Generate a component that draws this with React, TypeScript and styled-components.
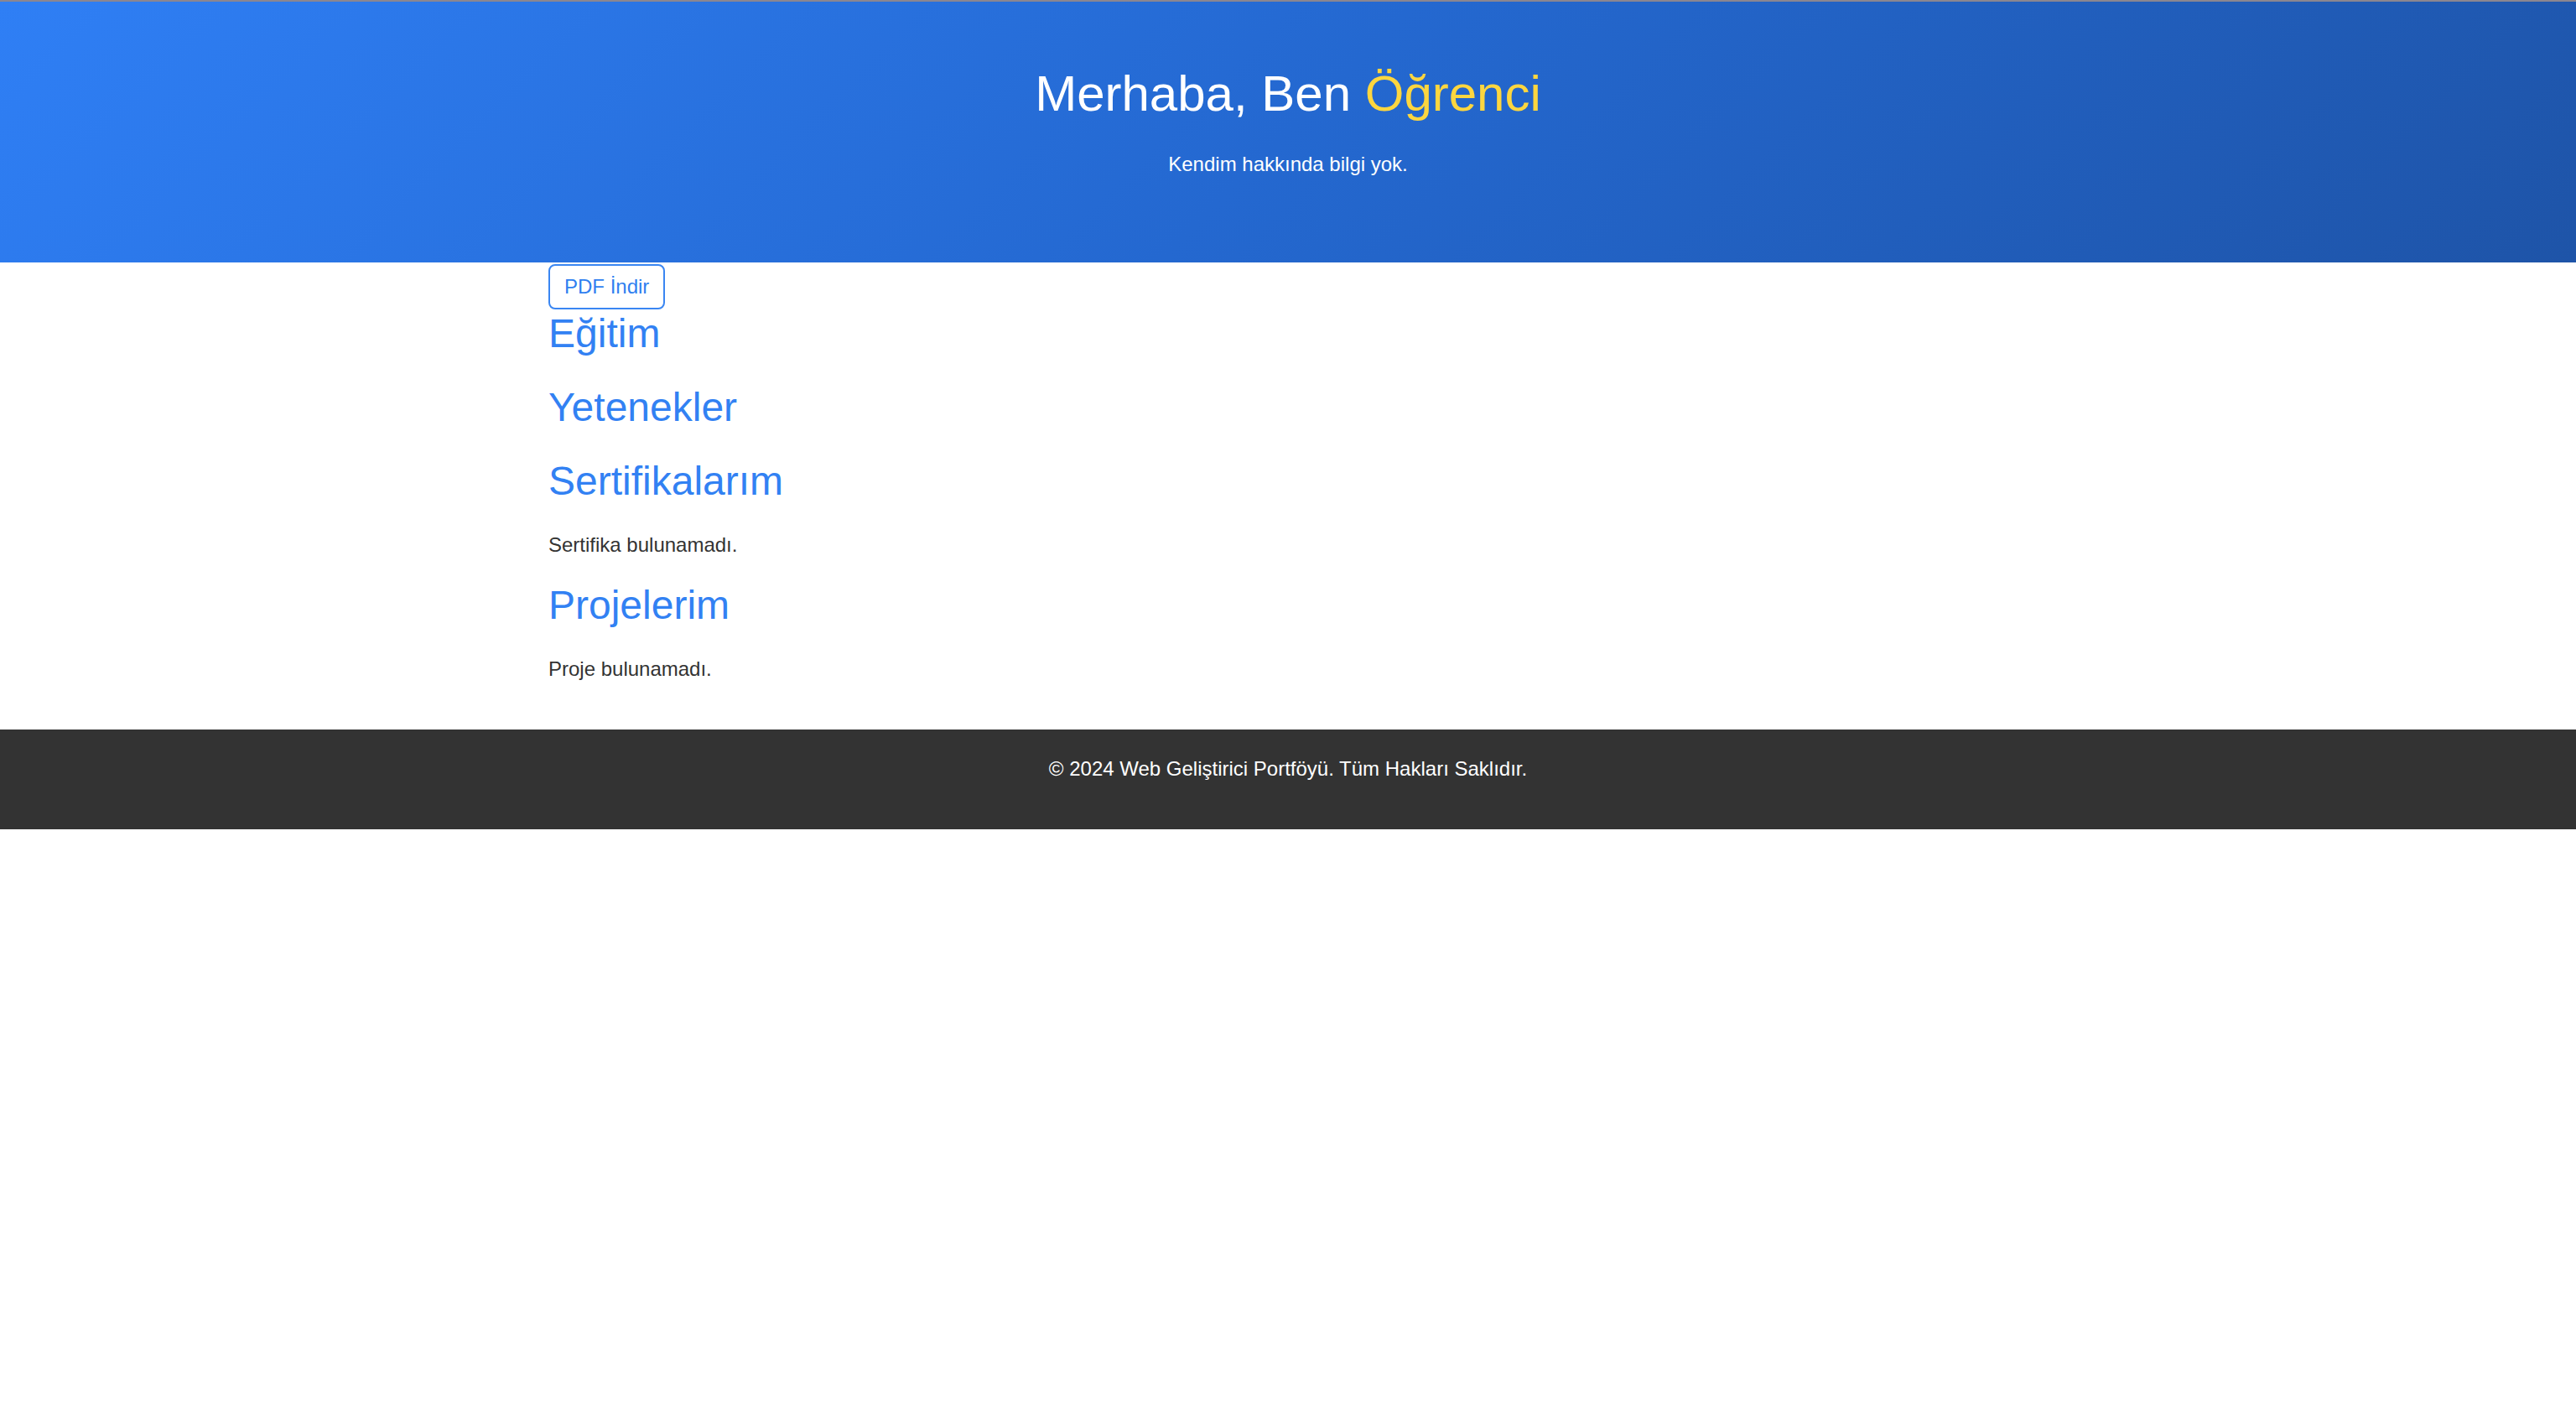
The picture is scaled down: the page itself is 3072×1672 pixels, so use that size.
import React from "react";
import styled, { createGlobalStyle } from "styled-components";

const GlobalStyle = createGlobalStyle`
  html, body {
    margin: 0;
    padding: 0;
    background: #ffffff;
  }
  body {
    font-family: "Liberation Sans", Arial, Helvetica, sans-serif;
    color: #333333;
  }
  * { box-sizing: border-box; }
`;

const Hero = styled.header`
  border-top: 2px solid #8b8690;
  background: linear-gradient(135deg, #2f7ff5 0%, #2468d0 50%, #1e54a8 100%);
  padding: 76px 20px 103px;
  text-align: center;
  color: #ffffff;
`;

const Title = styled.h1`
  margin: 0;
  font-size: 60px;
  line-height: 68px;
  font-weight: 400;
`;

const Highlight = styled.span`
  color: #fdd63f;
`;

const Lead = styled.p`
  margin: 36px 0 0;
  font-size: 24px;
  line-height: 28px;
`;

const Container = styled.main`
  max-width: 1764px;
  margin: 0 auto;
  padding-top: 2px;
  display: flex;
  flex-direction: column;
  align-items: flex-start;
`;

const OutlineButton = styled.button`
  height: 54px;
  padding: 0 17px;
  border: 2px solid #3a86f2;
  border-radius: 8px;
  background: #ffffff;
  color: #2f7ff0;
  font-family: inherit;
  font-size: 24px;
  line-height: 50px;
  cursor: pointer;
`;

const Sections = styled.div`
  margin-top: 1px;
  display: flex;
  flex-direction: column;
  gap: 30px;
`;

const Section = styled.section<{ $empty?: boolean }>`
  display: flex;
  flex-direction: column;
  gap: 34px;
  margin-bottom: ${(p) => (p.$empty ? "2px" : "0")};
`;

const SectionTitle = styled.h2`
  margin: 0;
  font-size: 48px;
  line-height: 56px;
  font-weight: 400;
  color: #3281f3;
`;

const EmptyText = styled.p`
  margin: 0;
  font-size: 24px;
  line-height: 28px;
  color: #333333;
`;

const Footer = styled.footer`
  margin-top: 58px;
  background: #333333;
  color: #ffffff;
  text-align: center;
  padding: 33px 20px 58px;
  font-size: 24px;
  line-height: 28px;
`;

const sections: { title: string; empty?: string }[] = [
  { title: "Eğitim" },
  { title: "Yetenekler" },
  { title: "Sertifikalarım", empty: "Sertifika bulunamadı." },
  { title: "Projelerim", empty: "Proje bulunamadı." },
];

export default function App() {
  return (
    <>
      <GlobalStyle />
      <Hero>
        <Title>
          Merhaba, Ben <Highlight>Öğrenci</Highlight>
        </Title>
        <Lead>Kendim hakkında bilgi yok.</Lead>
      </Hero>
      <Container>
        <OutlineButton type="button">PDF İndir</OutlineButton>
        <Sections>
          {sections.map((s) => (
            <Section key={s.title} $empty={!s.empty}>
              <SectionTitle>{s.title}</SectionTitle>
              {s.empty && <EmptyText>{s.empty}</EmptyText>}
            </Section>
          ))}
        </Sections>
      </Container>
      <Footer>© 2024 Web Geliştirici Portföyü. Tüm Hakları Saklıdır.</Footer>
    </>
  );
}
